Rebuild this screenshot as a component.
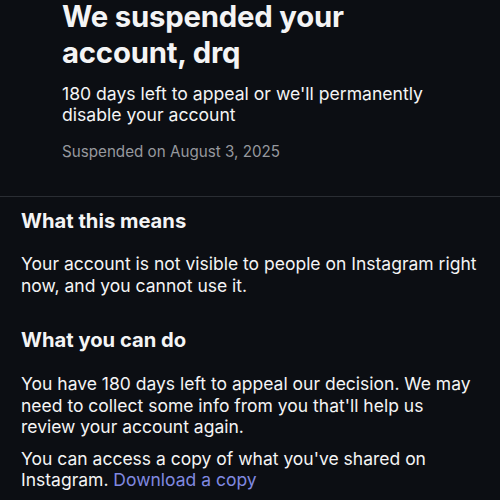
import React from "react";

export default function App() {
  return (
    <div
      className="w-[500px] h-[500px] overflow-hidden bg-[#0c0e13] text-[#f4f4f5]"
      style={{ fontFamily: "Inter, 'Noto Sans', sans-serif" }}
    >
      <div className="pl-[62px] pr-[40px]">
        <h1 className="mt-[-1px] text-[29.3px] leading-[36px] font-bold tracking-[-0.2px]">
          We suspended your
          <br />
          account, drq
        </h1>
        <p className="mt-[12px] text-[17.6px] leading-[21px]">
          180 days left to appeal or we'll permanently disable your account
        </p>
        <p className="mt-[17px] text-[15.2px] leading-[20px] text-[#96989e]">
          Suspended on August 3, 2025
        </p>
      </div>
      <div className="mt-[34px] h-px bg-[#2a2d33]" />
      <div className="px-[21px] pt-[12px]">
        <h2 className="text-[20.2px] leading-[24px] font-bold">What this means</h2>
        <p className="mt-[20px] text-[17.5px] leading-[21.5px]">
          Your account is not visible to people on Instagram right now, and you cannot use it.
        </p>
        <h2 className="mt-[32px] text-[20.2px] leading-[24px] font-bold">What you can do</h2>
        <p className="mt-[21px] text-[17.5px] leading-[21.5px]">
          You have 180 days left to appeal our decision. We may need to collect some info from you that'll help us review your account again.
        </p>
        <p className="mt-[10px] text-[17.5px] leading-[21.5px]">
          You can access a copy of what you've shared on Instagram.{" "}
          <span className="text-[#8089e0]">Download a copy</span>
        </p>
      </div>
    </div>
  );
}
